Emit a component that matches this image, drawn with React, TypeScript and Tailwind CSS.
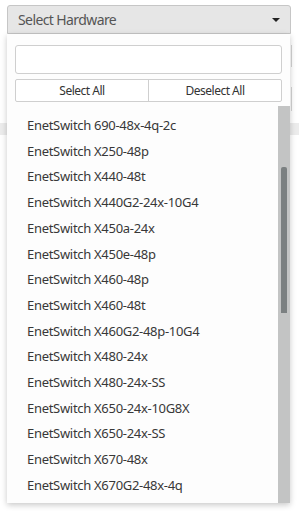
const items = [
  "EnetSwitch 690-48x-4q-2c",
  "EnetSwitch X250-48p",
  "EnetSwitch X440-48t",
  "EnetSwitch X440G2-24x-10G4",
  "EnetSwitch X450a-24x",
  "EnetSwitch X450e-48p",
  "EnetSwitch X460-48p",
  "EnetSwitch X460-48t",
  "EnetSwitch X460G2-48p-10G4",
  "EnetSwitch X480-24x",
  "EnetSwitch X480-24x-SS",
  "EnetSwitch X650-24x-10G8X",
  "EnetSwitch X650-24x-SS",
  "EnetSwitch X670-48x",
  "EnetSwitch X670G2-48x-4q",
];

export default function App() {
  return (
    <div className="relative w-[299px] h-[511px] overflow-hidden bg-white font-['Noto_Sans',sans-serif]">
      {/* page behind the dropdown */}
      <div className="flex flex-col pt-[5px]">
        <div className="h-[29px]" />
        <div className="mt-[11px] ml-auto mr-[7px] w-[60px] h-[22px] border-r border-[#d4d4d4]" />
        <div className="mt-[20px] ml-auto mr-[7px] w-[60px] h-[24px] border-r border-[#d4d4d4]" />
        <div className="mt-[12px] h-[12px] bg-[#ececec]" />
      </div>

      <div className="absolute left-[7px] top-[5px] w-[284px]">
        <button className="flex items-center w-full h-[29px] pl-[10px] pr-[10px] bg-[#e6e6e6] border border-[#c6c6c6] rounded-t-[3px] text-[14px] tracking-[-0.6px] text-[#555]">
          <span className="flex-1 text-left">Select Hardware</span>
          <span className="w-0 h-0 border-l-[4px] border-r-[4px] border-t-[4px] border-l-transparent border-r-transparent border-t-[#222]" />
        </button>

        <div className="flex flex-col w-[283px] h-[469px] bg-[#fdfdfd] shadow-[0_2px_6px_rgba(0,0,0,0.22)]">
          <div className="px-[8px] pt-[11px]">
            <input className="block w-full h-[29px] border border-[#cfcfcf] rounded-[3px] bg-white outline-none" />
            <div className="flex mt-[5px] h-[23px] border border-[#cfcfcf] rounded-[2px] bg-white text-[12px] tracking-[-0.5px] text-[#333]">
              <div className="flex-1 flex items-center justify-center border-r border-[#cfcfcf]">Select All</div>
              <div className="flex-1 flex items-center justify-center">Deselect All</div>
            </div>
          </div>

          <div className="flex flex-1 mt-[4px] min-h-0">
            <ul className="flex-1 overflow-hidden pt-[7px] pl-[20px]">
              {items.map((t) => (
                <li key={t} className="flex items-center h-[25.7px] text-[13px] tracking-[-0.3px] text-[#383838] whitespace-nowrap">
                  {t}
                </li>
              ))}
            </ul>
            <div className="w-[12px] bg-[#c3c4c4] flex justify-center">
              <div className="mt-[61px] w-[6px] h-[146px] bg-[#7b8081] rounded-t-[2px]" />
            </div>
          </div>
        </div>
      </div>
    </div>
  );
}
